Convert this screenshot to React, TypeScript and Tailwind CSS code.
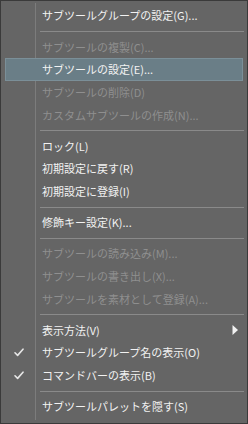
import React from "react";

type Item =
  | { type: "sep" }
  | { type: "item"; label: string; disabled?: boolean; active?: boolean; checked?: boolean; submenu?: boolean };

const items: Item[] = [
  { type: "item", label: "サブツールグループの設定(G)..." },
  { type: "sep" },
  { type: "item", label: "サブツールの複製(C)...", disabled: true },
  { type: "item", label: "サブツールの設定(E)...", active: true },
  { type: "item", label: "サブツールの削除(D)", disabled: true },
  { type: "item", label: "カスタムサブツールの作成(N)...", disabled: true },
  { type: "sep" },
  { type: "item", label: "ロック(L)" },
  { type: "item", label: "初期設定に戻す(R)" },
  { type: "item", label: "初期設定に登録(I)" },
  { type: "sep" },
  { type: "item", label: "修飾キー設定(K)..." },
  { type: "sep" },
  { type: "item", label: "サブツールの読み込み(M)...", disabled: true },
  { type: "item", label: "サブツールの書き出し(X)...", disabled: true },
  { type: "item", label: "サブツールを素材として登録(A)...", disabled: true },
  { type: "sep" },
  { type: "item", label: "表示方法(V)", submenu: true },
  { type: "item", label: "サブツールグループ名の表示(O)", checked: true },
  { type: "item", label: "コマンドバーの表示(B)", checked: true },
  { type: "sep" },
  { type: "item", label: "サブツールパレットを隠す(S)" },
];

function Check() {
  return (
    <svg width="10" height="9" viewBox="0 0 10 9" className="block">
      <path d="M1 4.8 L3.6 7.4 L9 1.2" fill="none" stroke="#e6e6e6" strokeWidth="1.6" strokeLinecap="round" strokeLinejoin="round" />
    </svg>
  );
}

function Arrow() {
  return (
    <svg width="6" height="10" viewBox="0 0 6 10" className="block">
      <path d="M0.5 0 L6 5 L0.5 10 Z" fill="#f2f2f2" />
    </svg>
  );
}

export default function App() {
  return (
    <div className="relative w-[248px] h-[424px] bg-[#656565] border border-[#3a3a3a] pt-[3.6px] font-['Noto_Sans_CJK_JP','Noto_Sans',sans-serif] text-[11px] select-none overflow-hidden">
      <div className="absolute left-[34px] top-[2px] bottom-[3px] w-px bg-[#7c7c7c]" />
      <div className="relative flex flex-col">
        {items.map((it, i) =>
          it.type === "sep" ? (
            <div key={i} className="h-[8.5px] flex items-center ml-[39px] mr-[3px]">
              <div className="h-px w-full bg-[#8a8a8a]" />
            </div>
          ) : (
            <div
              key={i}
              className={
                "relative flex items-center h-[22.67px] mx-[4px] border " +
                (it.active ? "bg-[#6a7e87] border-[#7b8f98]" : "border-transparent")
              }
            >
              <div className="w-[36px] shrink-0 flex justify-start pl-[8px]">
                {it.checked ? <Check /> : null}
              </div>
              <span className={"whitespace-nowrap leading-none " + (it.disabled ? "text-[#8f8f8f]" : "text-[#f2f2f2]")}>
                {it.label}
              </span>
              {it.submenu ? (
                <div className="ml-auto mr-[4px]">
                  <Arrow />
                </div>
              ) : null}
            </div>
          )
        )}
      </div>
    </div>
  );
}
